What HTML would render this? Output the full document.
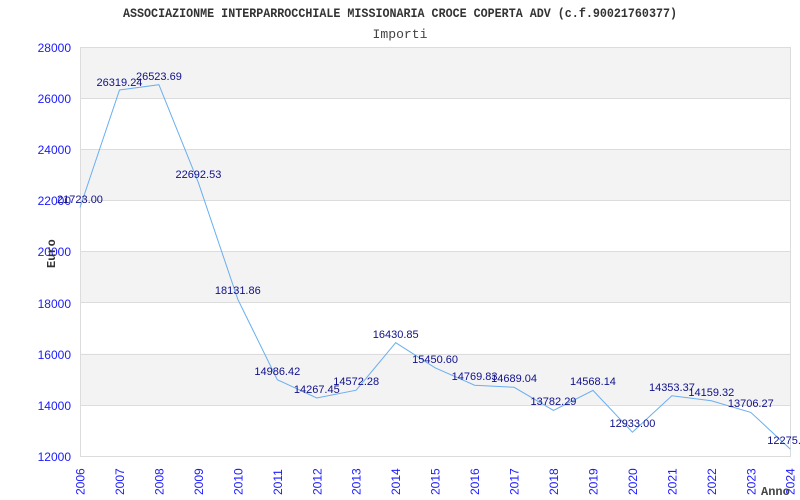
<!DOCTYPE html>
<html><head><meta charset="utf-8"><style>
html,body{margin:0;padding:0;background:#fff;width:800px;height:500px;overflow:hidden}
svg{display:block}
</style></head><body>
<svg width="800" height="500" viewBox="0 0 800 500" xmlns="http://www.w3.org/2000/svg">
<rect width="800" height="500" fill="#fff"/>
<text x="400" y="17" text-anchor="middle" font-family="Liberation Mono, monospace" font-size="13" font-weight="bold" fill="#333" textLength="554" lengthAdjust="spacingAndGlyphs">ASSOCIAZIONME INTERPARROCCHIALE MISSIONARIA CROCE COPERTA ADV (c.f.90021760377)</text>
<text x="400" y="38" text-anchor="middle" font-family="Liberation Mono, monospace" font-size="13" fill="#444" textLength="55" lengthAdjust="spacingAndGlyphs">Importi</text>
<g fill="#f3f3f3">
<rect x="80" y="47" width="710" height="51.1"/>
<rect x="80" y="149.3" width="710" height="51.1"/>
<rect x="80" y="251.5" width="710" height="51.1"/>
<rect x="80" y="353.8" width="710" height="51.1"/>
</g>
<g stroke="#dcdcdc" stroke-width="1">
<line x1="80" y1="47.5" x2="790" y2="47.5"/>
<line x1="80" y1="98.5" x2="790" y2="98.5"/>
<line x1="80" y1="149.5" x2="790" y2="149.5"/>
<line x1="80" y1="200.5" x2="790" y2="200.5"/>
<line x1="80" y1="251.5" x2="790" y2="251.5"/>
<line x1="80" y1="302.5" x2="790" y2="302.5"/>
<line x1="80" y1="354.5" x2="790" y2="354.5"/>
<line x1="80" y1="405.5" x2="790" y2="405.5"/>
<line x1="80" y1="456.5" x2="790" y2="456.5"/>
<line x1="80.5" y1="47" x2="80.5" y2="457"/>
<line x1="790.5" y1="47" x2="790.5" y2="457"/>
</g>
<g font-family="Liberation Sans, sans-serif" font-size="12" fill="#1a1aff" text-anchor="end">
<text x="71" y="52">28000</text>
<text x="71" y="103">26000</text>
<text x="71" y="154">24000</text>
<text x="71" y="205">22000</text>
<text x="71" y="256">20000</text>
<text x="71" y="308">18000</text>
<text x="71" y="359">16000</text>
<text x="71" y="410">14000</text>
<text x="71" y="461">12000</text>
</g>
<g font-family="Liberation Sans, sans-serif" font-size="12" fill="#1a1aff">
<text transform="translate(84.5,495) rotate(-90)">2006</text>
<text transform="translate(124,495) rotate(-90)">2007</text>
<text transform="translate(163.4,495) rotate(-90)">2008</text>
<text transform="translate(202.9,495) rotate(-90)">2009</text>
<text transform="translate(242.3,495) rotate(-90)">2010</text>
<text transform="translate(281.8,495) rotate(-90)">2011</text>
<text transform="translate(321.3,495) rotate(-90)">2012</text>
<text transform="translate(360.7,495) rotate(-90)">2013</text>
<text transform="translate(400.2,495) rotate(-90)">2014</text>
<text transform="translate(439.6,495) rotate(-90)">2015</text>
<text transform="translate(479.1,495) rotate(-90)">2016</text>
<text transform="translate(518.6,495) rotate(-90)">2017</text>
<text transform="translate(558,495) rotate(-90)">2018</text>
<text transform="translate(597.5,495) rotate(-90)">2019</text>
<text transform="translate(636.9,495) rotate(-90)">2020</text>
<text transform="translate(676.4,495) rotate(-90)">2021</text>
<text transform="translate(715.8,495) rotate(-90)">2022</text>
<text transform="translate(755.3,495) rotate(-90)">2023</text>
<text transform="translate(794.7,495) rotate(-90)">2024</text>
</g>
<text transform="translate(55,268) rotate(-90)" font-family="Liberation Mono, monospace" font-size="12" font-weight="bold" fill="#333">Euro</text>
<text x="761" y="495" font-family="Liberation Mono, monospace" font-size="12" font-weight="bold" fill="#444">Anno</text>
<polyline fill="none" stroke="#6aaef0" stroke-width="1" points="80,207.5 119.5,90 158.9,84.7 198.4,182.7 237.8,299.3 277.3,379.7 316.8,398 356.2,390.2 395.7,342.7 435.1,367.8 474.6,385.2 514.1,387.3 553.5,410.4 593,390.4 632.4,432.2 671.9,395.8 711.3,400.8 750.8,412.4 790.2,449"/>
<g font-family="Liberation Sans, sans-serif" font-size="11" fill="#10108a" text-anchor="middle">
<text x="80" y="203">21723.00</text>
<text x="119.5" y="86">26319.24</text>
<text x="158.9" y="80">26523.69</text>
<text x="198.4" y="178">22692.53</text>
<text x="237.8" y="294">18131.86</text>
<text x="277.3" y="375">14986.42</text>
<text x="316.8" y="393">14267.45</text>
<text x="356.2" y="385">14572.28</text>
<text x="395.7" y="338">16430.85</text>
<text x="435.1" y="363">15450.60</text>
<text x="474.6" y="380">14769.83</text>
<text x="514.1" y="382">14689.04</text>
<text x="553.5" y="405">13782.29</text>
<text x="593" y="385">14568.14</text>
<text x="632.4" y="427">12933.00</text>
<text x="671.9" y="391">14353.37</text>
<text x="711.3" y="396">14159.32</text>
<text x="750.8" y="407">13706.27</text>
<text x="790.2" y="444">12275.30</text>
</g>
</svg>
</body></html>
